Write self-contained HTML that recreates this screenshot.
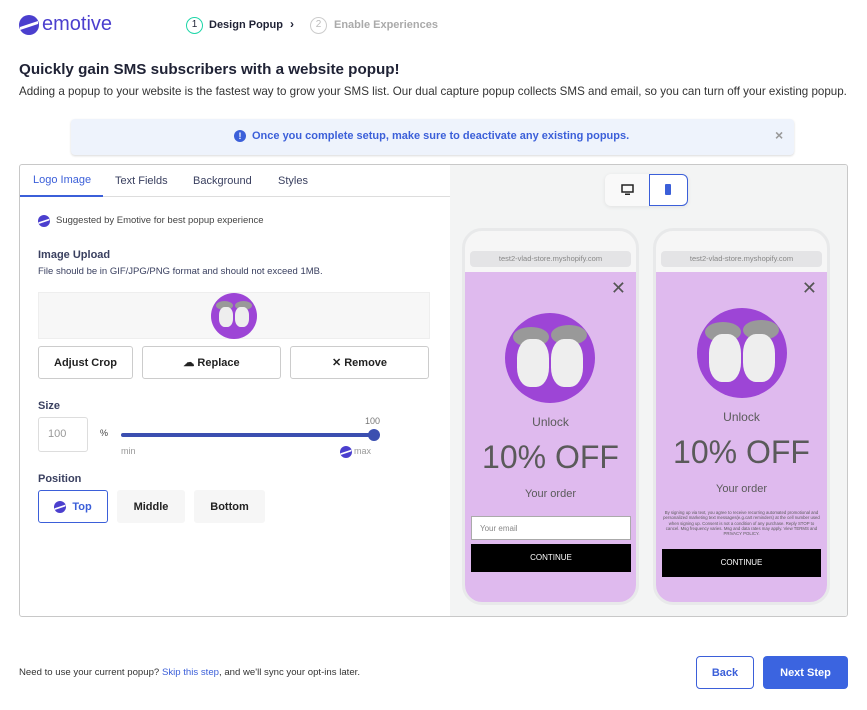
<!DOCTYPE html><html><head><style>
*{box-sizing:border-box;margin:0;padding:0}
body{width:867px;height:710px;background:#fff;font-family:"Liberation Sans",sans-serif;color:#1f2235;position:relative;overflow:hidden}
.a{position:absolute}
.btn{position:absolute;border:1px solid #ccc;border-radius:3px;font-size:11px;font-weight:bold;display:flex;align-items:center;justify-content:center;color:#222;background:#fff}
.ph{position:absolute;border:3px solid #e8e9ea;border-radius:20px;background:#f6f6f6;overflow:hidden}
.url{position:absolute;left:5px;right:5px;top:20px;height:16px;background:#e4e4e6;border-radius:4px;font-size:7.5px;color:#888;text-align:center;line-height:16px}
.pur{position:absolute;left:0;right:0;top:41px;bottom:0;background:#dfbaee}
.face{position:absolute;border-radius:50%;background:#9d45d6;overflow:hidden}
.x{position:absolute;font-size:18px;color:#555;font-weight:normal}
.t{position:absolute;left:0;right:0;text-align:center;color:#5a5a5a}
</style></head><body>
<svg class="a" style="left:19px;top:15px" width="20" height="20" viewBox="0 0 20 20"><circle cx="10" cy="10" r="10" fill="#4b3fce"/><path d="M1 12 L19 6 L19 9 L1 15Z" fill="#fff"/></svg>
<div class="a" style="left:42px;top:13px;font-size:20px;color:#4b3fce">emotive</div>
<div class="a" style="left:186px;top:17px;width:17px;height:17px;border:1.5px solid #1ed6a8;border-radius:50%;font-size:10px;text-align:center;line-height:14px">1</div>
<div class="a" style="left:209px;top:19px;font-size:11px;font-weight:bold">Design Popup</div>
<div class="a" style="left:290px;top:17px;font-size:12px;font-weight:bold">›</div>
<div class="a" style="left:310px;top:17px;width:17px;height:17px;border:1.5px solid #ccc;border-radius:50%;font-size:10px;color:#bbb;text-align:center;line-height:14px">2</div>
<div class="a" style="left:334px;top:19px;font-size:11px;font-weight:bold;color:#aaa">Enable Experiences</div>
<div class="a" style="left:19px;top:61px;font-size:15.2px;font-weight:bold">Quickly gain SMS subscribers with a website popup!</div>
<div class="a" style="left:19px;top:85px;font-size:11.6px;color:#333">Adding a popup to your website is the fastest way to grow your SMS list. Our dual capture popup collects SMS and email, so you can turn off your existing popup.</div>
<div class="a" style="left:71px;top:119px;width:723px;height:36px;background:#eef3fc;border-radius:4px;box-shadow:0 1px 2px rgba(0,0,0,.15)">
<div class="a" style="left:163px;top:11px;width:12px;height:12px;border-radius:50%;background:#3b5fd9;color:#fff;font-size:9px;font-weight:bold;text-align:center;line-height:12px">!</div>
<div class="a" style="left:181px;top:11px;font-size:11px;font-weight:bold;color:#3b5fd9">Once you complete setup, make sure to deactivate any existing popups.</div>
<div class="a" style="left:704px;top:8px;font-size:14px;color:#999;font-weight:bold">×</div></div>
<div class="a" style="left:19px;top:164px;width:829px;height:453px;border:1px solid #c8c8c8;border-radius:3px;overflow:hidden">
<div class="a" style="left:430px;top:0;width:400px;height:453px;background:#f3f4f4"></div>
<div class="a" style="left:0;top:31px;width:430px;height:1px;background:#ddd"></div>
<div class="a" style="left:0;top:30px;width:83px;height:2px;background:#3b5fd9"></div>
<div class="a" style="left:13px;top:9px;font-size:11px;color:#3b5fd9">Logo Image</div>
<div class="a" style="left:95px;top:10px;font-size:11px;color:#3a4060">Text Fields</div>
<div class="a" style="left:173px;top:10px;font-size:11px;color:#3a4060">Background</div>
<div class="a" style="left:258px;top:10px;font-size:11px;color:#3a4060">Styles</div>
</div>
<svg class="a" style="left:38px;top:215px" width="12" height="12" viewBox="0 0 20 20"><circle cx="10" cy="10" r="10" fill="#4b3fce"/><path d="M1 12 L19 6 L19 9 L1 15Z" fill="#fff"/></svg>
<div class="a" style="left:56px;top:215px;font-size:9.5px;color:#444">Suggested by Emotive for best popup experience</div>
<div class="a" style="left:38px;top:249px;font-size:11px;font-weight:bold;color:#3a4060">Image Upload</div>
<div class="a" style="left:38px;top:266px;font-size:9.5px;color:#3a4060">File should be in GIF/JPG/PNG format and should not exceed 1MB.</div>
<div class="a" style="left:38px;top:292px;width:392px;height:47px;background:#f7f7f7;border:1px solid #eee"></div>
<div class="face" style="left:211px;top:293px;width:46px;height:46px"><div class="a" style="left:5px;top:8px;width:17px;height:9px;background:#999;border-radius:50%"></div><div class="a" style="left:24px;top:8px;width:17px;height:9px;background:#999;border-radius:50%"></div><div class="a" style="left:8px;top:14px;width:14px;height:20px;background:#eee;border-radius:40%"></div><div class="a" style="left:24px;top:14px;width:14px;height:20px;background:#eee;border-radius:40%"></div></div>
<div class="btn" style="left:38px;top:346px;width:95px;height:33px">Adjust Crop</div>
<div class="btn" style="left:142px;top:346px;width:139px;height:33px">☁ Replace</div>
<div class="btn" style="left:290px;top:346px;width:139px;height:33px">✕ Remove</div>
<div class="a" style="left:38px;top:400px;font-size:11px;font-weight:bold;color:#3a4060">Size</div>
<div class="a" style="left:38px;top:417px;width:50px;height:35px;border:1px solid #ddd;border-radius:3px;font-size:11px;color:#999;padding:10px 0 0 9px">100</div>
<div class="a" style="left:100px;top:428px;font-size:9px;color:#444">%</div>
<div class="a" style="left:121px;top:433px;width:253px;height:4px;background:#3b4fb0;border-radius:2px"></div>
<div class="a" style="left:368px;top:429px;width:12px;height:12px;background:#3b4fb0;border-radius:50%"></div>
<div class="a" style="left:365px;top:416px;font-size:9px;color:#777">100</div>
<div class="a" style="left:121px;top:446px;font-size:9px;color:#999">min</div>
<svg class="a" style="left:340px;top:446px" width="12" height="12" viewBox="0 0 20 20"><circle cx="10" cy="10" r="10" fill="#4b3fce"/><path d="M1 12 L19 6 L19 9 L1 15Z" fill="#fff"/></svg>
<div class="a" style="left:354px;top:446px;font-size:9px;color:#999">max</div>
<div class="a" style="left:38px;top:473px;font-size:11px;font-weight:bold;color:#3a4060">Position</div>
<div class="btn" style="left:38px;top:490px;width:70px;height:33px;border-color:#3b5fd9;color:#3b5fd9"><svg width="12" height="12" viewBox="0 0 20 20" style="margin-right:6px"><circle cx="10" cy="10" r="10" fill="#4b3fce"/><path d="M1 12 L19 6 L19 9 L1 15Z" fill="#fff"/></svg>Top</div>
<div class="btn" style="left:117px;top:490px;width:68px;height:33px;border:none;background:#f6f6f6">Middle</div>
<div class="btn" style="left:194px;top:490px;width:71px;height:33px;border:none;background:#f6f6f6">Bottom</div>
<div class="a" style="left:605px;top:174px;width:83px;height:32px;background:#f9f9f9;border-radius:6px;box-shadow:0 1px 4px rgba(0,0,0,.08)"></div>
<div class="a" style="left:649px;top:174px;width:39px;height:32px;border:1px solid #3b5fd9;border-radius:0 6px 6px 0;background:#fff"></div>
<svg class="a" style="left:621px;top:184px" width="13" height="12" viewBox="0 0 13 12"><rect x="1" y="1" width="11" height="7" fill="none" stroke="#222" stroke-width="1.5"/><rect x="4" y="9.5" width="5" height="1.5" fill="#222"/></svg>
<div class="a" style="left:665px;top:184px;width:6px;height:11px;background:#3b5fd9;border-radius:1px"></div>
<div class="ph" style="left:462px;top:228px;width:177px;height:377px">
<div class="url">test2-vlad-store.myshopify.com</div><div class="pur">
<div class="x" style="right:10px;top:6px">✕</div>
<div class="face" style="left:40px;top:41px;width:90px;height:90px"><div class="a" style="left:8px;top:14px;width:36px;height:20px;background:#999;border-radius:50%"></div><div class="a" style="left:46px;top:12px;width:36px;height:20px;background:#999;border-radius:50%"></div><div class="a" style="left:12px;top:26px;width:32px;height:48px;background:#eee;border-radius:40%"></div><div class="a" style="left:46px;top:26px;width:32px;height:48px;background:#eee;border-radius:40%"></div></div>
<div class="t" style="top:143px;font-size:12px">Unlock</div>
<div class="t" style="top:167px;font-size:32px">10% OFF</div>
<div class="t" style="top:216px;font-size:11px">Your order</div>
<div class="a" style="left:6px;top:244px;width:160px;height:24px;background:#fff;border:1px solid #aaa;font-size:8px;color:#888;padding:7px 8px">Your email</div>
<div class="a" style="left:6px;top:272px;width:160px;height:28px;background:#000;color:#fff;font-size:8px;text-align:center;line-height:28px">CONTINUE</div>
</div></div>
<div class="ph" style="left:653px;top:228px;width:177px;height:377px">
<div class="url">test2-vlad-store.myshopify.com</div><div class="pur">
<div class="x" style="right:10px;top:6px">✕</div>
<div class="face" style="left:41px;top:36px;width:90px;height:90px"><div class="a" style="left:8px;top:14px;width:36px;height:20px;background:#999;border-radius:50%"></div><div class="a" style="left:46px;top:12px;width:36px;height:20px;background:#999;border-radius:50%"></div><div class="a" style="left:12px;top:26px;width:32px;height:48px;background:#eee;border-radius:40%"></div><div class="a" style="left:46px;top:26px;width:32px;height:48px;background:#eee;border-radius:40%"></div></div>
<div class="t" style="top:138px;font-size:12px">Unlock</div>
<div class="t" style="top:162px;font-size:32px">10% OFF</div>
<div class="t" style="top:211px;font-size:11px">Your order</div>
<div class="t" style="top:238px;font-size:4.3px;padding:0 6px;line-height:5.3px">By signing up via text, you agree to receive recurring automated promotional and personalized marketing text messages(e.g.cart reminders) at the cell number used when signing up. Consent is not a condition of any purchase. Reply STOP to cancel. Msg frequency varies. Msg and data rates may apply. View TERMS and PRIVACY POLICY.</div>
<div class="a" style="left:6px;top:277px;width:159px;height:28px;background:#000;color:#fff;font-size:8px;text-align:center;line-height:28px">CONTINUE</div>
</div></div>
<div class="a" style="left:19px;top:667px;font-size:9.6px;color:#333">Need to use your current popup? <span style="color:#3b5fd9">Skip this step</span>, and we'll sync your opt-ins later.</div>
<div class="btn" style="left:696px;top:656px;width:58px;height:33px;border-color:#3b5fd9;color:#3b5fd9;border-radius:4px">Back</div>
<div class="btn" style="left:763px;top:656px;width:85px;height:33px;border:none;background:#3b64e0;color:#fff;border-radius:4px">Next Step</div>
</body></html>
